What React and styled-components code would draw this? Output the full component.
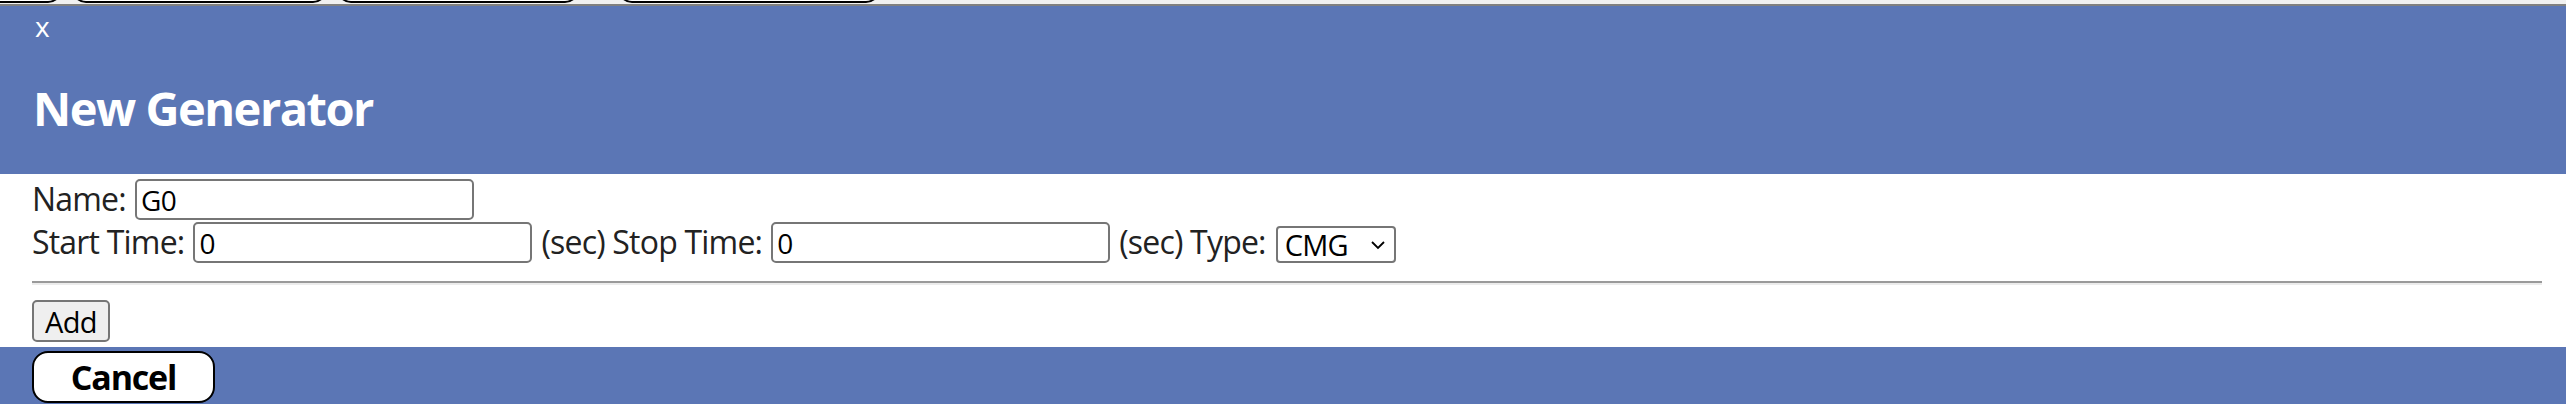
import React from "react";
import styled, { createGlobalStyle } from "styled-components";

const GlobalStyle = createGlobalStyle`
  html, body {
    margin: 0;
    padding: 0;
    background: #f0f0f0;
    overflow: hidden;
  }
  body {
    font-family: "Open Sans", "Noto Sans", sans-serif;
  }
`;

const tabs = [
  { left: -20, width: 82 },
  { left: 10, width: 255 },
  { left: 10, width: 242 },
  { left: 39, width: 262 },
];

const TabStrip = styled.div`
  display: flex;
  align-items: flex-end;
  height: 4px;
  overflow: hidden;
  background: #f0f0f0;
`;

const Tab = styled.div`
  flex-shrink: 0;
  height: 30px;
  margin-bottom: 1px;
  border: 2px solid #000;
  border-radius: 14px;
  background: #fff;
  box-sizing: border-box;
`;

const Modal = styled.div`
  border-top: 2px solid #808080;
  background: #fff;
`;

const Header = styled.div`
  box-sizing: border-box;
  height: 168px;
  padding: 7px 0 0 35px;
  background: #5b76b5;
  color: #fff;
`;

const Close = styled.span`
  display: block;
  height: 27px;
  font-size: 28px;
  line-height: 27px;
  cursor: pointer;
`;

const Title = styled.h2`
  margin: 36px 0 0 -2px;
  font-size: 47px;
  line-height: 64px;
  font-weight: 700;
  letter-spacing: -1.5px;
`;

const Body = styled.div`
  padding: 5px 24px 5px 32px;
  color: #222;
`;

const Row = styled.div`
  display: flex;
  align-items: baseline;
  height: 43px;
`;

const Label = styled.span`
  font-size: 32px;
  line-height: 1;
  letter-spacing: -0.8px;
  white-space: pre;
  margin: 0 ${(p) => p.$gap || 9}px 0 ${(p) => p.$lead || 0}px;
`;

const TextInput = styled.input`
  box-sizing: border-box;
  width: 339px;
  height: 41px;
  padding: 0 4px;
  border: 2px solid #767676;
  border-radius: 5px;
  font-family: "Open Sans", sans-serif;
  font-size: 28px;
  letter-spacing: -0.4px;
  color: #000;
  background: #fff;
  outline: none;
`;

const SelectWrap = styled.span`
  position: relative;
  display: inline-block;
  align-self: center;
  margin: 2px 0 0 1px;
`;

const Select = styled.select`
  display: block;
  appearance: none;
  box-sizing: border-box;
  width: 120px;
  height: 37px;
  padding: 0 30px 0 7px;
  border: 2px solid #767676;
  border-radius: 4px;
  font-family: "Open Sans", sans-serif;
  font-size: 29px;
  line-height: 33px;
  letter-spacing: -0.8px;
  color: #000;
  background: #fff;
`;

const Chevron = styled.svg`
  position: absolute;
  right: 11px;
  top: 15px;
  pointer-events: none;
`;

const Divider = styled.hr`
  margin: 16px 0 0;
  height: 0;
  border: none;
  border-top: 2px solid #9a9a9a;
  border-bottom: 2px solid #ececec;
`;

const AddButton = styled.button`
  display: block;
  box-sizing: border-box;
  width: 78px;
  height: 42px;
  margin-top: 15px;
  padding: 0;
  border: 2px solid #767676;
  border-radius: 5px;
  background: #efefef;
  font-family: "Open Sans", sans-serif;
  font-size: 29px;
  letter-spacing: -0.6px;
  line-height: 1;
  color: #000;
`;

const Footer = styled.div`
  height: 60px;
  padding: 4px 0 0 32px;
  background: #5b76b5;
`;

const CancelButton = styled.button`
  box-sizing: border-box;
  width: 183px;
  height: 52px;
  padding: 0;
  border: 2px solid #000;
  border-radius: 16px;
  background: #fff;
  font-family: "Open Sans", sans-serif;
  font-size: 34px;
  font-weight: 700;
  letter-spacing: -1.2px;
  color: #000;
`;

export default function App() {
  return (
    <>
      <GlobalStyle />
      <TabStrip>
        {tabs.map((t, i) => (
          <Tab key={i} style={{ marginLeft: t.left, width: t.width }} />
        ))}
      </TabStrip>
      <Modal>
        <Header>
          <Close>x</Close>
          <Title>New Generator</Title>
        </Header>
        <Body>
          <Row>
            <Label>Name:</Label>
            <TextInput defaultValue="G0" />
          </Row>
          <Row>
            <Label>Start Time:</Label>
            <TextInput defaultValue="0" />
            <Label $lead={9}>(sec) Stop Time:</Label>
            <TextInput defaultValue="0" />
            <Label $lead={9}>(sec) Type:</Label>
            <SelectWrap>
              <Select defaultValue="CMG">
                <option value="CMG">CMG</option>
              </Select>
              <Chevron width="14" height="9" viewBox="0 0 14 9">
                <polyline points="1,1 7,7 13,1" fill="none" stroke="#000" strokeWidth="1.8" />
              </Chevron>
            </SelectWrap>
          </Row>
          <Divider />
          <AddButton>Add</AddButton>
        </Body>
        <Footer>
          <CancelButton>Cancel</CancelButton>
        </Footer>
      </Modal>
    </>
  );
}
